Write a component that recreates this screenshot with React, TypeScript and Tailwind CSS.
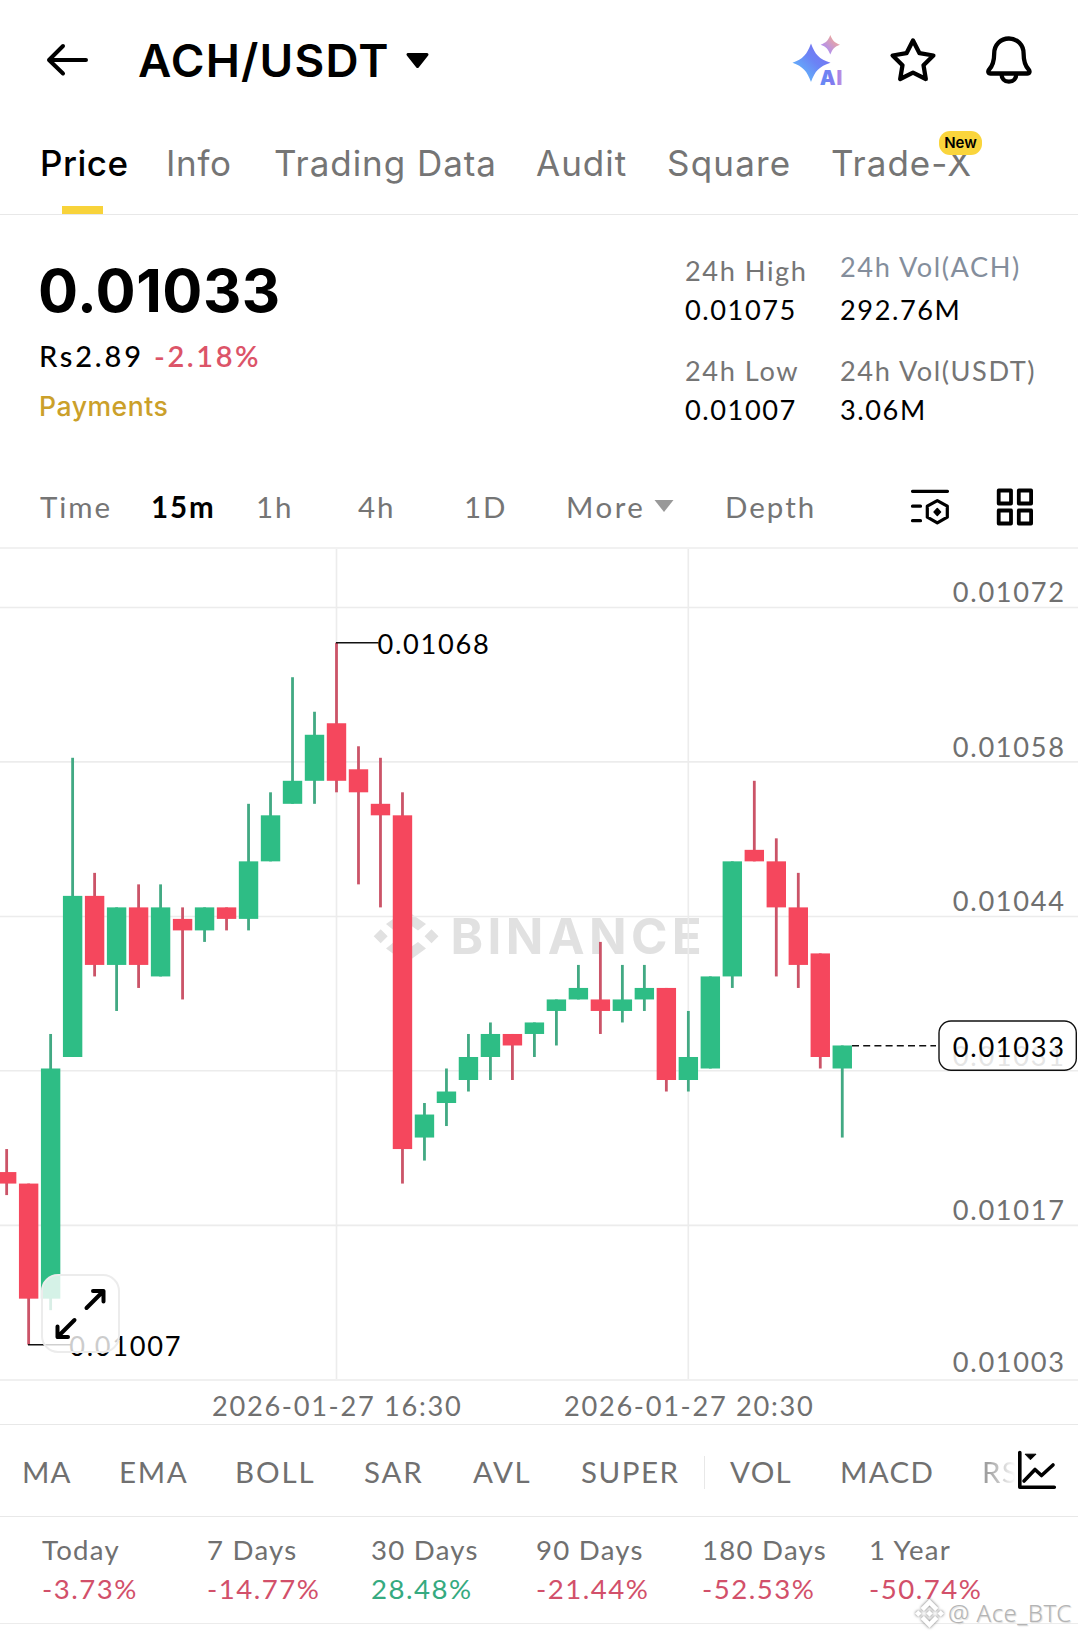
import type { ReactNode } from "react";

const RED = "#f5475d";
const GREEN = "#2ebd85";
const RED_WICK = "#cb5468";
const GREEN_WICK = "#42a983";

/* Prices in 1e-5 USDT, one entry per 15m candle */
type Candle = [top: number, bottom: number, high: number, low: number, up: 0 | 1];

const CANDLES: Candle[] = [
  [1022, 1021, 1024, 1020, 0],
  [1021, 1011, 1021, 1007, 0],
  [1031, 1011, 1034, 1010, 1],
  [1046, 1032, 1058, 1032, 1],
  [1046, 1040, 1048, 1039, 0],
  [1045, 1040, 1045, 1036, 1],
  [1045, 1040, 1047, 1038, 0],
  [1045, 1039, 1047, 1039, 1],
  [1044, 1043, 1045, 1037, 0],
  [1045, 1043, 1045, 1042, 1],
  [1045, 1044, 1045, 1043, 0],
  [1049, 1044, 1054, 1043, 1],
  [1053, 1049, 1055, 1049, 1],
  [1056, 1054, 1065, 1054, 1],
  [1060, 1056, 1062, 1054, 1],
  [1061, 1056, 1068, 1055, 0],
  [1057, 1055, 1059, 1047, 0],
  [1054, 1053, 1058, 1045, 0],
  [1053, 1024, 1055, 1021, 0],
  [1027, 1025, 1028, 1023, 1],
  [1029, 1028, 1031, 1026, 1],
  [1032, 1030, 1034, 1029, 1],
  [1034, 1032, 1035, 1030, 1],
  [1034, 1033, 1034, 1030, 0],
  [1035, 1034, 1035, 1032, 1],
  [1037, 1036, 1037, 1033, 1],
  [1038, 1037, 1040, 1037, 1],
  [1037, 1036, 1042, 1034, 0],
  [1037, 1036, 1040, 1035, 1],
  [1038, 1037, 1040, 1036, 1],
  [1038, 1030, 1038, 1029, 0],
  [1032, 1030, 1036, 1029, 1],
  [1039, 1031, 1039, 1031, 1],
  [1049, 1039, 1049, 1038, 1],
  [1050, 1049, 1056, 1049, 0],
  [1049, 1045, 1051, 1039, 0],
  [1045, 1040, 1048, 1038, 0],
  [1041, 1032, 1041, 1031, 0],
  [1033, 1031, 1033, 1025, 1],
];

const TOP = 549;
const py = (p: number) => 642.7 - TOP + (1068 - p) * 11.508;
const cx = (i: number) => 336.5 + (i - 15) * 21.99;

const GRID_ROWS = [607.5, 761.9, 916.5, 1070.7, 1225.4];
const AXIS: [string, number][] = [
  ["0.01072", 602],
  ["0.01058", 757],
  ["0.01044", 911],
  ["0.01031", 1065.7],
  ["0.01017", 1219.7],
  ["0.01003", 1371.7],
];

function BinanceMark({ size }: { size: number }) {
  return (
    <svg width={size} height={size} viewBox="0 0 126.6 126.6" fill="currentColor">
      <path d="M38.7 53.2l24.6-24.6 24.6 24.6 14.3-14.3L63.3 0 24.4 38.9zM0 63.3L14.3 49l14.3 14.3-14.3 14.3zM38.7 73.4L63.3 98l24.6-24.6 14.3 14.3-38.9 38.9-38.9-38.9zM98 63.3L112.3 49l14.3 14.3-14.3 14.3zM77.8 63.3L63.3 48.8 48.8 63.3l14.5 14.5z" />
    </svg>
  );
}

function Chart() {
  return (
    <svg width="1078" height="875" viewBox="0 0 1078 875" className="block">
      <g fill="#e1e1e1">
        <path d="M406 361L426 375L418 381.500L406 373L394 381.500L386 375z" />
        <path d="M406 414L426 399.500L418 393L406 401.500L394 393L386 399.500z" />
        <path d="M373.700 387.300l7-7 7 7-7 7z" />
        <path d="M424.500 387.300l7-7 7 7-7 7z" />
        <text x="450.500" y="405" fontSize="49.300" fontWeight="700" letterSpacing="4.400" fontFamily="Inter">BINANCE</text>
      </g>
      <g stroke="#ececec" strokeWidth="1.6">
        {GRID_ROWS.map((y) => (
          <line key={y} x1="0" x2="1078" y1={y - TOP} y2={y - TOP} />
        ))}
        <line x1="336.500" x2="336.500" y1="0" y2="831" />
        <line x1="688.300" x2="688.300" y1="0" y2="831" />
        <line x1="0" x2="1078" y1="831" y2="831" stroke="#f0f0f0" strokeWidth="2" />
      </g>
      <g fill="#707070" fontSize="27.200" letterSpacing="1.7">
        {AXIS.map(([t, y]) => (
          <text key={t} x="952.800" y={y - TOP}>{t}</text>
        ))}
        <text x="212" y="866.500">2026-01-27 16:30</text>
        <text x="564" y="866.500">2026-01-27 20:30</text>
      </g>
      {CANDLES.map(([top, bottom, high, low, up], i) => (
        <g key={i}>
          <rect x={cx(i) - 1.4} width="2.8" y={py(high)} height={py(low) - py(high)} fill={up ? GREEN_WICK : RED_WICK} />
          <rect x={cx(i) - 9.700} width="19.400" y={py(top)} height={py(bottom) - py(top)} fill={up ? GREEN : RED} />
        </g>
      ))}
      <g stroke="#111" strokeWidth="1.5">
        <line x1="336" x2="378.500" y1={py(1068)} y2={py(1068)} />
        <line x1="28" x2="71" y1={py(1007)} y2={py(1007)} />
        <line x1="852" x2="936" y1={py(1033) + 0.3} y2={py(1033) + 0.3} strokeDasharray="7 4.200" />
      </g>
      <rect x="939" y="472" width="137.300" height="49.200" rx="12" fill="#fff" fillOpacity="0.82" stroke="#111" strokeWidth="1.4" />
      <g fill="#000" fontSize="27.200" letterSpacing="1.7">
        <text x="377.500" y="105.300">0.01068</text>
        <text x="69.200" y="807">0.01007</text>
        <text x="952.800" y="508">0.01033</text>
      </g>
    </svg>
  );
}

function Stat({ label, value, tone, shift }: { label: string; value: string; tone?: string; shift?: string }) {
  return (
    <div className="text-[27.200px] leading-[39px] tracking-[1.550px] whitespace-nowrap">
      <div className={`${tone ?? "text-[#757575]"} ${shift ?? ""}`}>{label}</div>
      <div className="text-black">{value}</div>
    </div>
  );
}

function Tab({ children, className }: { children: ReactNode; className: string }) {
  return <div className={`relative h-full pt-[24px] whitespace-nowrap ${className}`}>{children}</div>;
}

const PERIODS: [string, string, boolean][] = [
  ["Today", "-3.73%", false],
  ["7 Days", "-14.77%", false],
  ["30 Days", "28.48%", true],
  ["90 Days", "-21.44%", false],
  ["180 Days", "-52.53%", false],
  ["1 Year", "-50.74%", false],
];

export default function App() {
  return (
    <div className="relative h-[1638px] w-[1078px] overflow-hidden bg-white font-['Lato',sans-serif] text-black">
      <header className="flex h-[119px] items-center pr-[43px] pl-[44px]">
        <svg width="46" height="40" viewBox="44 40 46 40" fill="none" stroke="#000" strokeWidth="4" strokeLinecap="round" strokeLinejoin="round">
          <path d="M86 60H49M63 46L49 60L63 73.500" />
        </svg>
        <h1 className="mt-[3px] ml-[48px] w-[251px] font-['Inter'] text-[45.800px] leading-[60px] font-semibold tracking-[1.200px] whitespace-nowrap">ACH/USDT</h1>
        <svg className="ml-[15px]" width="26" height="20" viewBox="404 49 26 20">
          <path d="M408 53.500h19L417.500 65.500z" stroke="#000" strokeWidth="3" strokeLinejoin="round" />
        </svg>
        <div className="ml-auto flex items-center">
          <svg width="56" height="60" viewBox="790 30 56 60">
            <defs>
              <linearGradient id="spark" x1="0" y1="1" x2="1" y2="0">
                <stop offset="0.150" stopColor="#62b8fb" />
                <stop offset="0.550" stopColor="#6b83f5" />
                <stop offset="1" stopColor="#7f6cf0" />
              </linearGradient>
              <linearGradient id="twinkle" x1="0" y1="1" x2="1" y2="0">
                <stop offset="0.250" stopColor="#b290ee" />
                <stop offset="0.800" stopColor="#eda79c" />
              </linearGradient>
              <linearGradient id="label" x1="0" y1="0" x2="1" y2="0">
                <stop offset="0" stopColor="#5f8cf6" />
                <stop offset="0.600" stopColor="#8379ef" />
                <stop offset="1" stopColor="#cf95dc" />
              </linearGradient>
            </defs>
            <path fill="url(#spark)" d="M811 43.500C815 54.500 819 59 830.500 62.700C819 66.500 815 71 811 82C807 71 803 66.500 792.500 62.700C803 59 807 54.500 811 43.500z" />
            <path fill="url(#twinkle)" d="M830.300 35C832.500 40.500 834.500 42.700 840 44.700C834.500 46.700 832.500 49 830.300 54.500C828.100 49 826.100 46.700 820.600 44.700C826.100 42.700 828.100 40.500 830.300 35z" />
            <text x="819.700" y="84.500" fontSize="20" fontWeight="900" fill="url(#label)" stroke="#fff" strokeWidth="2" paintOrder="stroke" letterSpacing="1" fontFamily="Inter">AI</text>
          </svg>
          <svg className="ml-[42px]" width="50" height="50" viewBox="888.500 35 50 50" fill="none" stroke="#000" strokeWidth="4.300" strokeLinejoin="round">
            <path d="M913.500 40.500L920 53.200L933.900 55.500L924 65.200L926.300 79L913.500 72.600L900.700 79L903 65.200L893.100 55.500L907 53.200z" />
          </svg>
          <svg className="ml-[46px] mr-[1px]" width="50" height="54" viewBox="984.500 32 50 54" fill="none" stroke="#000" strokeWidth="4.300" strokeLinejoin="round">
            <path d="M1009.400 37.500C1001 37.500 994.700 44 994.700 52.500C994.700 60.500 992.500 65.500 989.700 68.500C988 70.500 988.800 72.500 991 72.500H1027.800C1030 72.500 1030.800 70.500 1029.100 68.500C1026.300 65.500 1024.100 60.500 1024.100 52.500C1024.100 44 1017.800 37.500 1009.400 37.500z" />
            <path d="M1002 73C1002 77.500 1005 80.700 1009.400 80.700C1013.800 80.700 1016.800 77.500 1016.800 73" />
          </svg>
        </div>
      </header>

      <nav className="grid h-[96px] grid-cols-[126px_108px_262px_131px_164px_auto] border-b border-[#e8e8e8] pl-[40px] font-['Inter'] text-[35px] leading-[40px] text-[#757575]">
        <Tab className="tracking-[0.500px] text-black font-medium">
          Price
          <span className="absolute bottom-0 left-[22px] h-[8px] w-[41px] bg-[#f8d33a]" />
        </Tab>
        <Tab className="tracking-[0.700px]">Info</Tab>
        <Tab className="tracking-[0.950px]">Trading Data</Tab>
        <Tab className="tracking-[1px]">Audit</Tab>
        <Tab className="tracking-[1.200px]">Square</Tab>
        <Tab className="tracking-[1px]">
          Trade-X
          <span className="absolute top-[12px] left-[108px] flex h-[24px] w-[43px] items-center justify-center rounded-[11px] bg-[#fad53c] text-[15px] font-semibold tracking-[-0.100px] text-black">New</span>
        </Tab>
      </nav>

      <section className="flex h-[250px] justify-between pr-[19px] pl-[39px]">
        <div className="pt-[43px]">
          <div className="-ml-[1px] font-['Inter'] text-[59.500px] leading-[64px] font-bold tracking-[0.500px]">0.01033</div>
          <div className="mt-[14px] flex text-[29px] leading-[40px]">
            <span className="w-[115px] font-medium tracking-[2.800px]">Rs2.89</span>
            <span className="font-semibold tracking-[2.600px] text-[#dc5468]">-2.18%</span>
          </div>
          <div className="mt-[10px] font-['Inter'] text-[26.600px] leading-[40px] font-medium tracking-[0.500px] text-[#cba02a]">Payments</div>
        </div>
        <div className="grid w-[374px] grid-cols-[155px_auto] content-start gap-y-[22px] pt-[36px]">
          <Stat label="24h High" value="0.01075" />
          <Stat label="24h Vol(ACH)" value="292.76M" tone="text-[#848e9c]" shift="-translate-y-[4px]" />
          <Stat label="24h Low" value="0.01007" />
          <Stat label="24h Vol(USDT)" value="3.06M" />
        </div>
      </section>

      <section className="grid h-[84px] grid-cols-[111px_105px_102px_106px_102px_159px_184px_86px_auto] items-center border-b-2 border-[#f1f1f1] pt-[2px] pl-[40px] text-[29.500px] leading-[40px] tracking-[1.900px] text-[#757575]">
        <span>Time</span>
        <span className="font-bold text-black">15m</span>
        <span>1h</span>
        <span>4h</span>
        <span>1D</span>
        <span className="flex items-center tracking-[2.500px]">
          More
          <svg className="ml-[9px] -mt-[3px]" width="20" height="14" viewBox="0 0 20 14"><path d="M0.500 1h19L10 13z" fill="#999" /></svg>
        </span>
        <span className="tracking-[2px]">Depth</span>
        <svg width="42" height="40" viewBox="909 487 42 40" fill="none" stroke="#000" strokeWidth="3.200" strokeLinecap="round" strokeLinejoin="round">
          <path d="M912.500 491.300H947.500M912.500 506.200H920.500M912.500 520.700H920.500" />
          <path d="M937.300 500.700L947.300 506.200V517.200L937.300 522.900L927.300 517.200V506.200z" />
          <path d="M937.300 508.500L940.500 512L937.300 515.500L934.100 512z" fill="#000" strokeWidth="1.500" />
        </svg>
        <svg width="40" height="40" viewBox="995 486 40 40" fill="none" stroke="#000" strokeWidth="3.800" strokeLinejoin="round">
          <path d="M998.700 489.500h12.300v13h-12.300zM1018.800 489.500h12.300v13h-12.300zM998.700 509.500h12.300v13h-12.300zM1018.800 509.500h12.300v13h-12.300z" />
        </svg>
      </section>

      <section className="relative h-[876px] border-b border-[#e8e8e8]">
        <Chart />
        <div className="absolute top-[725px] left-[41px] h-[79px] w-[79px] rounded-[17px] border-2 border-[#ececec] bg-white/80">
          <svg width="75" height="75" viewBox="43 1276 75 75" fill="none" stroke="#000" strokeWidth="4" strokeLinecap="round" strokeLinejoin="round">
            <path d="M86.500 1308L103.500 1291M93 1291H103.500V1301.500" />
            <path d="M74.500 1320L57.500 1337M57.500 1326.500V1337H68" />
          </svg>
        </div>
      </section>

      <section className="relative h-[92px] border-b border-[#e8e8e8]">
        <div className="grid h-full grid-cols-[97px_116px_129px_109px_108px_150px_110px_142px_60px] items-center pt-[3px] pl-[22px] text-[29.500px] leading-[40px] text-[#707070]">
          <span className="tracking-[1.100px]">MA</span>
          <span className="tracking-[1.600px]">EMA</span>
          <span className="tracking-[1.900px]">BOLL</span>
          <span className="tracking-[1.800px]">SAR</span>
          <span className="tracking-[1.600px]">AVL</span>
          <span className="flex items-center tracking-[1.500px]">
            SUPER
            <i className="mr-[26px] ml-auto h-[33px] w-px bg-[#e8e8e8]" />
          </span>
          <span className="-ml-[1px] tracking-[1.300px]">VOL</span>
          <span className="-ml-[1px] tracking-[1.300px]">MACD</span>
          <span className="-ml-[1px] w-[56px] bg-linear-to-r from-[#a0a0a0] from-10% to-white to-60% bg-clip-text tracking-[1.300px] text-transparent">RSI</span>
        </div>
        <svg className="absolute top-[24px] left-[1015px]" width="44" height="44" viewBox="1015 1449 44 44" fill="none" stroke="#000" strokeWidth="3.600" strokeLinecap="round" strokeLinejoin="round">
          <path d="M1019.800 1452.500V1487.300H1054.300" />
          <path d="M1024 1481L1035 1469.500L1041.500 1475.500L1053 1465" />
          <path d="M1025.500 1454.200H1036L1030.700 1459.500z" fill="#000" strokeWidth="1" />
        </svg>
      </section>

      <section className="grid h-[107px] grid-cols-[165px_164px_165px_166px_167px_auto] border-b border-[#ececec] pt-[13px] pl-[42px] text-[27.600px] leading-[39px]">
        {PERIODS.map(([label, value, up]) => (
          <div key={label} className="whitespace-nowrap">
            <div className="tracking-[1.250px] text-[#707070]">{label}</div>
            <div className={`tracking-[1.500px] ${up ? "text-[#35aa80]" : "text-[#d2506a]"}`}>{value}</div>
          </div>
        ))}
      </section>

      <div className="absolute top-[1596px] left-[915px] flex items-center">
        <span className="text-white drop-shadow-[0_0_1.500px_#666]"><BinanceMark size={29} /></span>
        <span className="ml-[4px] font-['Noto_Sans'] text-[24px] leading-[34px] font-light tracking-[0.500px] whitespace-nowrap text-[#b4b4b4] [text-shadow:1px_1px_1px_#ddd]">@ Ace_BTC</span>
      </div>
    </div>
  );
}
